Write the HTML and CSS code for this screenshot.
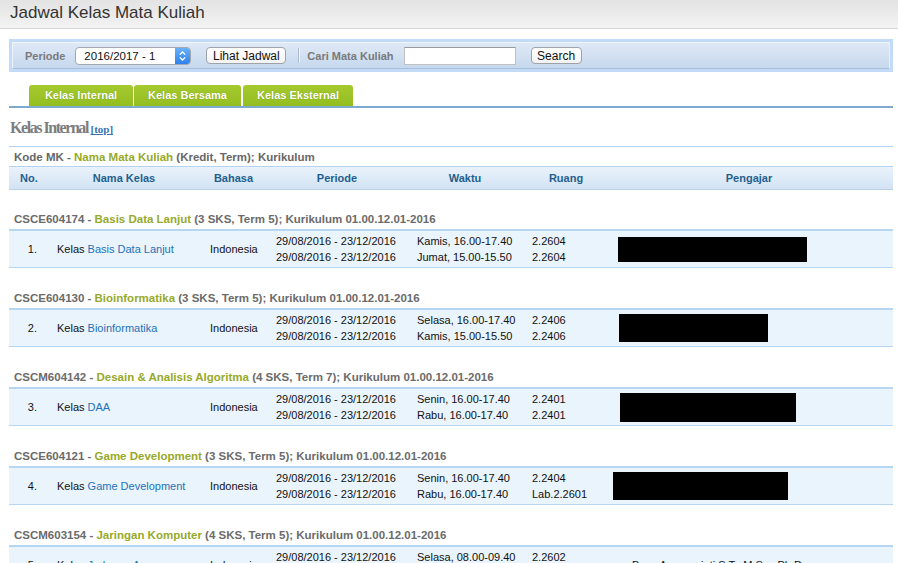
FILE: index.html
```html
<!DOCTYPE html>
<html lang="id">
<head>
<meta charset="utf-8">
<title>Jadwal Kelas Mata Kuliah</title>
<link rel="stylesheet" href="styles.css">
</head>
<body>
<div class="header"><h1>Jadwal Kelas Mata Kuliah</h1></div>
<div class="page">
  <div class="filter">
    <div class="filter-inner">
      <span class="lbl">Periode</span>
      <div class="select"><span class="sel-text">2016/2017 - 1</span><span class="sel-btn"><svg width="15" height="18" viewBox="0 0 15 18"><path d="M4.8 7.6 L7.5 5 L10.2 7.6 M4.8 10.4 L7.5 13 L10.2 10.4" stroke="#fff" stroke-width="1.3" fill="none"/></svg></span></div>
      <span class="btn btn-lihat">Lihat Jadwal</span>
      <span class="sep"></span>
      <span class="lbl lbl-cari">Cari Mata Kuliah</span>
      <span class="input"></span>
      <span class="btn btn-search">Search</span>
    </div>
  </div>

  <div class="tabs">
    <span class="tab t1">Kelas Internal</span>
    <span class="tab t2">Kelas Bersama</span>
    <span class="tab t3">Kelas Eksternal</span>
  </div>

  <h2 class="section">Kelas Internal <a class="toplink">[top]</a></h2>

  <div class="sched">
    <div class="kode-row">Kode MK - <span class="nm">Nama Mata Kuliah</span> (Kredit, Term); Kurikulum</div>
    <div class="grid head-row">
      <div class="h-no">No.</div>
      <div class="h">Nama Kelas</div>
      <div class="h">Bahasa</div>
      <div class="h">Periode</div>
      <div class="h">Waktu</div>
      <div class="h">Ruang</div>
      <div class="h">Pengajar</div>
    </div>

    <div class="group first">
      <div class="course">CSCE604174 - <span class="nm">Basis Data Lanjut</span> (3 SKS, Term 5); Kurikulum 01.00.12.01-2016</div>
      <div class="grid row">
        <div class="c-no">1.</div>
        <div class="c">Kelas <a class="lnk">Basis Data Lanjut</a></div>
        <div class="c">Indonesia</div>
        <div class="c">29/08/2016 - 23/12/2016<br>29/08/2016 - 23/12/2016</div>
        <div class="c">Kamis, 16.00-17.40<br>Jumat, 15.00-15.50</div>
        <div class="c">2.2604<br>2.2604</div>
        <div class="c-pg"><span class="redact r1"></span></div>
      </div>
    </div>

    <div class="group">
      <div class="course">CSCE604130 - <span class="nm">Bioinformatika</span> (3 SKS, Term 5); Kurikulum 01.00.12.01-2016</div>
      <div class="grid row">
        <div class="c-no">2.</div>
        <div class="c">Kelas <a class="lnk">Bioinformatika</a></div>
        <div class="c">Indonesia</div>
        <div class="c">29/08/2016 - 23/12/2016<br>29/08/2016 - 23/12/2016</div>
        <div class="c">Selasa, 16.00-17.40<br>Kamis, 15.00-15.50</div>
        <div class="c">2.2406<br>2.2406</div>
        <div class="c-pg"><span class="redact r2"></span></div>
      </div>
    </div>

    <div class="group">
      <div class="course">CSCM604142 - <span class="nm">Desain &amp; Analisis Algoritma</span> (4 SKS, Term 7); Kurikulum 01.00.12.01-2016</div>
      <div class="grid row">
        <div class="c-no">3.</div>
        <div class="c">Kelas <a class="lnk">DAA</a></div>
        <div class="c">Indonesia</div>
        <div class="c">29/08/2016 - 23/12/2016<br>29/08/2016 - 23/12/2016</div>
        <div class="c">Senin, 16.00-17.40<br>Rabu, 16.00-17.40</div>
        <div class="c">2.2401<br>2.2401</div>
        <div class="c-pg"><span class="redact r3"></span></div>
      </div>
    </div>

    <div class="group">
      <div class="course">CSCE604121 - <span class="nm">Game Development</span> (3 SKS, Term 5); Kurikulum 01.00.12.01-2016</div>
      <div class="grid row">
        <div class="c-no">4.</div>
        <div class="c">Kelas <a class="lnk">Game Development</a></div>
        <div class="c">Indonesia</div>
        <div class="c">29/08/2016 - 23/12/2016<br>29/08/2016 - 23/12/2016</div>
        <div class="c">Senin, 16.00-17.40<br>Rabu, 16.00-17.40</div>
        <div class="c">2.2404<br>Lab.2.2601</div>
        <div class="c-pg"><span class="redact r4"></span></div>
      </div>
    </div>

    <div class="group">
      <div class="course">CSCM603154 - <span class="nm">Jaringan Komputer</span> (4 SKS, Term 5); Kurikulum 01.00.12.01-2016</div>
      <div class="grid row">
        <div class="c-no">5.</div>
        <div class="c">Kelas <a class="lnk">Jarkom - A</a></div>
        <div class="c">Indonesia</div>
        <div class="c">29/08/2016 - 23/12/2016<br>29/08/2016 - 23/12/2016</div>
        <div class="c">Selasa, 08.00-09.40<br>Kamis, 08.00-08.50</div>
        <div class="c">2.2602<br>2.2602</div>
        <div class="c-pg pg-text">Bayu Anggorojati S.T., M.Sc., Ph.D.</div>
      </div>
    </div>
  </div>
</div>
</body>
</html>
```

FILE: styles.css
```css
* { box-sizing: border-box; }

body {
  margin: 0;
  background: #fff;
  color: #111;
  font-family: "Liberation Sans", Arial, sans-serif;
  font-size: 11px;
}

.header {
  height: 29px;
  background: linear-gradient(#e3e3e3, #f3f3f3);
  border-bottom: 1px solid #d6d6d6;
}
.header h1 {
  margin: 0;
  padding-left: 10px;
  font-family: "Liberation Sans", Arial, sans-serif;
  font-weight: normal;
  font-size: 17px;
  line-height: 26px;
  color: #333;
}

.page {
  padding: 10px 5px 0 9px;
}

/* filter bar */
.filter {
  width: 884px;
  border: 3px solid #c3dbf6;
}
.filter-inner {
  height: 27px;
  display: flex;
  align-items: center;
  padding-left: 12px;
  border: 1px solid;
  border-color: #eef4fb #eaf1fa #a8c0dc #eef4fb;
  background: linear-gradient(#dfe9f6, #c6d8ee);
}
.lbl {
  font-weight: bold;
  font-size: 11px;
  color: #7a7a7a;
}
.select {
  margin-left: 10px;
  width: 116px;
  height: 18px;
  display: flex;
  align-items: center;
  background: #fff;
  border: 1px solid #a3a8b0;
  border-radius: 4px;
  overflow: hidden;
}
.sel-text {
  flex: 1;
  padding-left: 8px;
  font-size: 11.5px;
  color: #111;
}
.sel-btn {
  width: 15px;
  height: 18px;
  display: flex;
  background: linear-gradient(#6db3fb, #2a7fec);
}
.btn {
  height: 17px;
  display: flex;
  align-items: center;
  justify-content: center;
  font-size: 12px;
  color: #111;
  background: linear-gradient(#ffffff, #f3f3f3);
  border: 1px solid #9ea3aa;
  border-radius: 4px;
}
.btn-lihat { margin-left: 15px; width: 80px; }
.btn-search { margin-left: 15px; width: 51px; }
.sep {
  margin-left: 12px;
  width: 1px;
  height: 15px;
  background: #a9bbd2;
  box-shadow: 1px 0 0 #eef4fb;
}
.lbl-cari { margin-left: 8px; }
.input {
  margin-left: 10px;
  width: 112px;
  height: 18px;
  background: #fff;
  border: 1px solid #c0c0c0;
  border-top-color: #9a9a9a;
}

/* tabs */
.tabs {
  margin-top: 13px;
  width: 884px;
  display: flex;
  padding-left: 20px;
  border-bottom: 2px solid #7eaad0;
}
.tab {
  height: 21px;
  line-height: 21px;
  text-align: center;
  color: #fff;
  font-weight: bold;
  font-size: 11px;
  background: linear-gradient(#a5ca2f, #93bd20);
  border-radius: 3px 3px 0 0;
  text-shadow: 0 0 1px #6f8f12;
}
.t1 { width: 104px; }
.t2 { width: 107px; margin-left: 1px; }
.t3 { width: 110px; margin-left: 2px; }

/* section heading */
.section {
  margin: 10px 0 8px 1px;
  height: 20px;
  line-height: 20px;
  font-family: "Liberation Serif", "Times New Roman", serif;
  font-size: 16px;
  font-weight: bold;
  letter-spacing: -1.45px;
  color: #7d7d7d;
}
.toplink {
  font-size: 11px;
  letter-spacing: 0;
  color: #3a73b8;
  text-decoration: underline;
}

/* schedule */
.sched {
  width: 884px;
}
.kode-row {
  height: 20px;
  line-height: 20px;
  padding-left: 5px;
  border-top: 1px solid #b3d3f0;
  font-weight: bold;
  font-size: 11.5px;
  color: #676767;
}
.nm { color: #97a92a; }

.grid {
  display: grid;
  grid-template-columns: 43px 153px 66px 141px 115px 87px 279px;
}
.head-row {
  height: 24px;
  align-items: center;
  border-top: 1px solid #b3d3f0;
  border-bottom: 1px solid #bdd1e5;
  background: linear-gradient(#eaf2fb, #d2e3f4);
  font-weight: bold;
  color: #1f5f8e;
}
.h-no { padding-left: 11px; }
.h { text-align: center; padding-right: 9px; }

.group { padding-top: 20px; }
.group.first { padding-top: 19px; }
.course {
  height: 20px;
  line-height: 20px;
  padding-left: 5px;
  font-weight: bold;
  font-size: 11.5px;
  color: #6b6b6b;
}
.row {
  height: 39px;
  align-items: center;
  border-top: 2px solid #b6d6f2;
  border-bottom: 1px solid #b6d6f2;
  background: #eaf4fd;
  line-height: 16px;
}
.c-no { text-align: right; padding-right: 15px; }
.c { padding-left: 5px; white-space: nowrap; }
.c-pg { display: flex; align-items: center; }
.pg-text { padding-left: 18px; }
.lnk { color: #2471b9; text-decoration: none; }

.redact { display: block; background: #000; }
.r1 { margin-left: 4px; width: 189px; height: 25px; }
.r2 { margin-left: 5px; width: 149px; height: 28px; }
.r3 { margin-left: 6px; width: 176px; height: 29px; }
.r4 { margin-left: -1px; width: 175px; height: 28px; }
```
